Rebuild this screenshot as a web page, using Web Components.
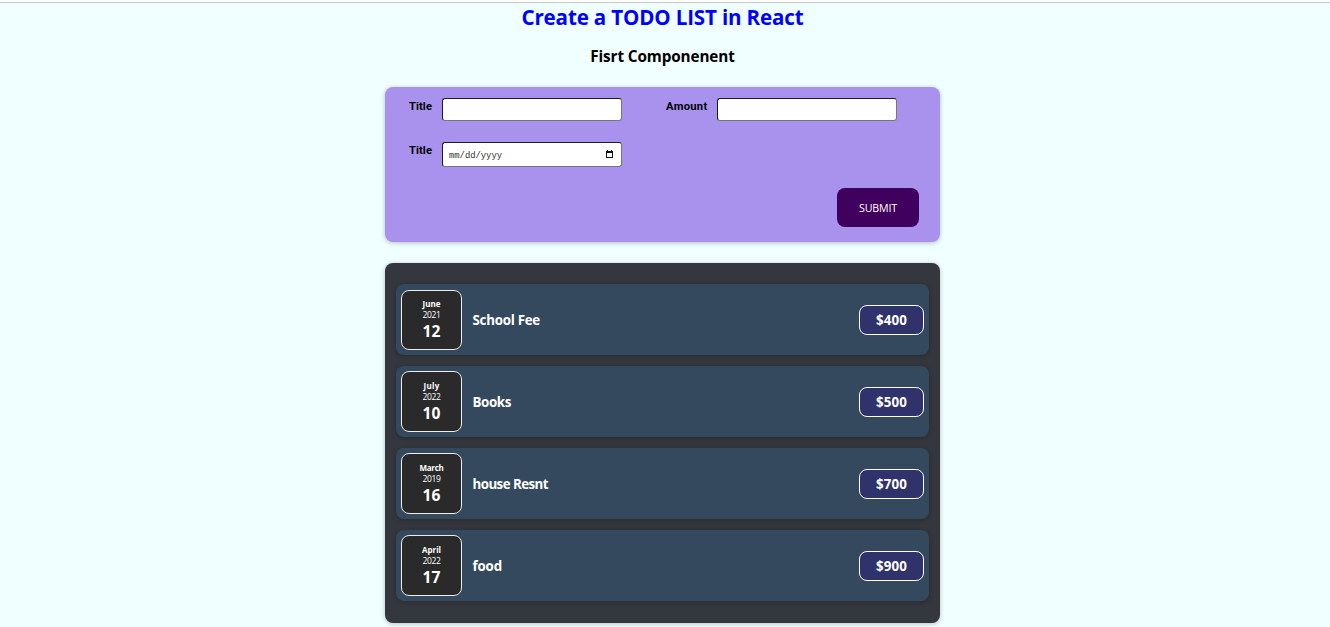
<!DOCTYPE html>
<html lang="en">
<head>
<meta charset="utf-8">
<title>Todo list</title>
<style>
html, body { margin: 0; height: 627px; overflow: hidden; background: #f0ffff; }
</style>
</head>
<body>
<todo-app></todo-app>
<script>
const define = (name, html, init) => {
  const tpl = document.createElement('template');
  tpl.innerHTML = html;
  customElements.define(name, class extends HTMLElement {
    constructor() {
      super();
      this.attachShadow({ mode: 'open' }).append(tpl.content.cloneNode(true));
    }
    connectedCallback() { if (init) init(this, this.shadowRoot); }
  });
};

/* A single line of text tracked to the given width. */
define('fit-text', `<style>
:host { display: inline-block; white-space: nowrap; }
span { display: inline-block; }
</style><span><slot></slot></span>`, (el, root) => {
  const span = root.querySelector('span');
  const want = parseFloat(el.getAttribute('width'));
  const n = el.textContent.length;
  const natural = span.getBoundingClientRect().width;
  const gap = (want - natural) / n;
  span.style.letterSpacing = gap.toFixed(3) + 'px';
});

define('form-field', `<style>
:host { display: flex; align-items: flex-start; height: var(--h, 23px); }
label { font: bold 11.2px/16px "Roboto", "Liberation Sans", sans-serif; color: #000; width: var(--label, 33px); flex: none; padding-top: 1px; }
.box { box-sizing: border-box; width: 180px; height: 100%; background: #fff; border: 1px solid #767676;
  border-top-color: #1c1c1c; border-left-color: #1c1c1c; border-radius: 3px; display: flex; align-items: center;
  justify-content: space-between; padding: 0 8px 0 6px; }
</style><label><slot name="label"></slot></label><div class="box"><slot></slot></div>`);

define('expense-form', `<style>
:host { box-sizing: border-box; display: flex; flex-direction: column; width: 555px; height: 155px; padding: 11px 21px 0 24px;
  background: #a892ee; border-radius: 8px; box-shadow: 0 1px 5px rgba(0,0,0,.25); }
.row { display: flex; gap: 44px; }
.second { margin-top: 21px; }
.amount { --label: 51px; }
.date { --h: 25px; }
.ph { font: 8.9px/12px "Liberation Mono", monospace; color: #333; margin-top: 3px; }
svg { display: block; margin-bottom: 2px; }
button { align-self: flex-end; margin: 21px 0 0; width: 82px; height: 39px; padding: 0; border: 0; border-radius: 8px;
  background: #40005d; color: #fff; font: 10.7px/16px "Open Sans", "Noto Sans", sans-serif; }
</style>
<div class="row">
  <form-field><fit-text slot="label" width="23">Title</fit-text></form-field>
  <form-field class="amount"><fit-text slot="label" width="41.5">Amount</fit-text></form-field>
</div>
<div class="row second">
  <form-field class="date"><fit-text slot="label" width="23">Title</fit-text>
    <fit-text class="ph" width="53">mm/dd/yyyy</fit-text>
    <svg width="7" height="8" viewBox="0 0 7 8" shape-rendering="crispEdges"><path d="M1 0h1v1h3V0h1v1h1v7H0V1h1zM1 3v4h5V3z" fill="#111" fill-rule="evenodd"/></svg>
  </form-field>
</div>
<button><fit-text width="38">SUBMIT</fit-text></button>`);

define('expense-item', `<style>
:host { box-sizing: border-box; display: flex; align-items: center; height: 71px; padding: 0 5px; background: #34495e;
  border-radius: 8px; box-shadow: 0 1px 5px rgba(0,0,0,.25); color: #fff; }
.date { box-sizing: border-box; flex: none; display: flex; flex-direction: column; align-items: center; justify-content: flex-end;
  width: 61px; height: 61px; padding-bottom: 7px; background: #2a2a2a; border: 1px solid #ececec; border-radius: 8px; }
:host(:first-of-type) .date { height: 60px; margin-top: 1px; }
.title { flex: 1; padding-left: 10.5px; font-size: 13.33px; font-weight: 700; line-height: 20px; }
.price { box-sizing: border-box; width: 65px; height: 30px; border: 1px solid #fff; border-radius: 8px; background: #30336b;
  display: flex; align-items: center; justify-content: center; font-size: 13.33px; font-weight: 700; line-height: 20px; }
</style>
<div class="date"><slot name="month"></slot><slot name="year"></slot><slot name="day"></slot></div>
<div class="title"><slot name="title"></slot></div>
<div class="price"><slot name="price"></slot></div>`);

const items = [
  ['June', 18, '2021', '12', 'School Fee', 67.5, '$400'],
  ['July', 16, '2022', '10', 'Books', 38.5, '$500'],
  ['March', 24, '2019', '16', 'house Resnt', 75.5, '$700'],
  ['April', 19, '2022', '17', 'food', 29.5, '$900']
];
define('expense-list', `<style>
:host { box-sizing: border-box; display: flex; flex-direction: column; gap: 11px; width: 555px; height: 360px;
  padding: 21px 11px; background: #35373f; border-radius: 8px; box-shadow: 0 1px 5px rgba(0,0,0,.25); }
.m { font-size: 8px; font-weight: 700; line-height: 11px; }
.y { font-size: 8.5px; line-height: 11px; }
.d { font-size: 15.6px; font-weight: 700; line-height: 22px; }
</style>` + items.map(([m, mw, y, d, t, tw, p]) => `<expense-item>
<fit-text class="m" slot="month" width="${mw}">${m}</fit-text>
<fit-text class="y" slot="year" width="18">${y}</fit-text>
<fit-text class="d" slot="day" width="18">${d}</fit-text>
<fit-text slot="title" width="${tw}">${t}</fit-text>
<fit-text slot="price" width="31">${p}</fit-text></expense-item>`).join(''));

define('todo-app', `<style>
:host { box-sizing: border-box; display: flex; flex-direction: column; align-items: center; height: 627px; padding-right: 5px;
  border-top: 2px solid #fff; background: linear-gradient(#c8c8c8 0 1px, #f0ffff 1px); font-family: "Open Sans", "Noto Sans", sans-serif; }
h1 { margin: 1px 0 0; font-size: 20.6px; line-height: 29px; font-weight: 700; color: #00f; }
h2 { margin: 13px 0 0; font-size: 15.3px; line-height: 22px; font-weight: 700; color: #000; }
expense-form { margin-top: 20px; }
expense-list { margin-top: 21px; }
</style>
<h1><fit-text width="282">Create a TODO LIST in React</fit-text></h1>
<h2><fit-text width="144.5">Fisrt Componenent</fit-text></h2>
<expense-form></expense-form>
<expense-list></expense-list>`);
</script>
</body>
</html>
